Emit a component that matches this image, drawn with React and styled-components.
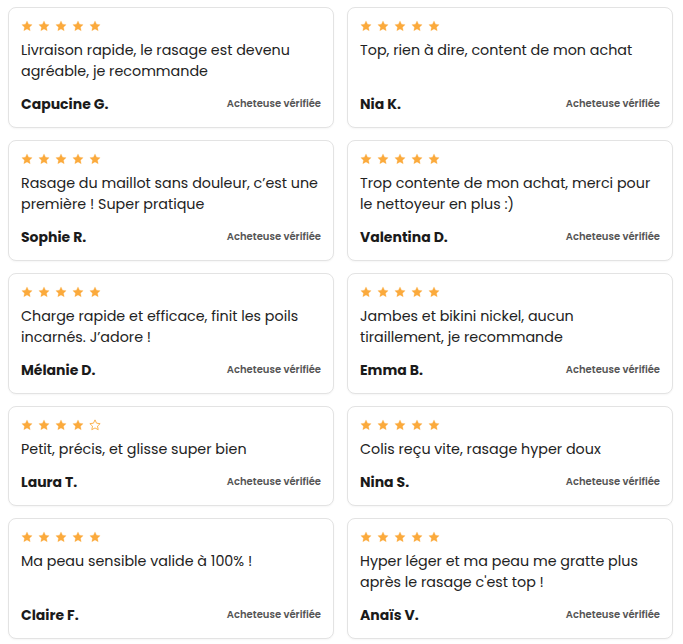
import React from "react";
import styled, { createGlobalStyle } from "styled-components";

const Global = createGlobalStyle`
  html, body { margin: 0; padding: 0; background: #fff; }
  body { font-family: Poppins, "Open Sans", "Liberation Sans", sans-serif; color: #1f1f1f; }
`;

const Page = styled.div`
  padding: 7px 10px 0 8px;
`;

const Grid = styled.div`
  display: grid;
  grid-template-columns: 1fr 1fr;
  column-gap: 13px;
  row-gap: 12px;
`;

const Card = styled.div`
  display: flex;
  flex-direction: column;
  background: #fff;
  border: 1px solid #e3e3e3;
  border-radius: 8px;
  padding: 12px 12px 13px 12px;
  box-shadow: 0 1px 2px rgba(0, 0, 0, 0.04);
`;

const Stars = styled.div`
  display: flex;
  gap: 5px;
  height: 12px;
  align-items: center;
`;

const Text = styled.p`
  margin: 8px 0 0 0;
  font-size: 14.3px;
  line-height: 21px;
  color: #222;
`;

const Footer = styled.div`
  margin-top: auto;
  padding-top: 12px;
  display: flex;
  align-items: center;
  justify-content: space-between;
  height: 20px;
  box-sizing: content-box;
`;

const Name = styled.span`
  font-size: 14px;
  font-weight: 700;
  color: #1a1a1a;
`;

const Badge = styled.span`
  font-size: 10px;
  font-weight: 600;
  color: #555;
`;

const Bottom = styled.div`
  margin-top: 5px;
  border-top: 1px dashed #dcdcdc;
  height: 10px;
`;

const Star = ({ filled }) => (
  <svg width="12" height="12" viewBox="0 0 24 24">
    <path
      d="M12 1.8l3.1 6.6 7.2.9-5.3 5 1.4 7.1L12 17.9l-6.4 3.5 1.4-7.1-5.3-5 7.2-.9z"
      fill={filled ? "#fbaa3c" : "none"}
      stroke="#fbaa3c"
      strokeWidth={filled ? 0.5 : 1.8}
      strokeLinejoin="round"
    />
  </svg>
);

const reviews = [
  { r: 5, t: "Livraison rapide, le rasage est devenu agréable, je recommande", n: "Capucine G." },
  { r: 5, t: "Top, rien à dire, content de mon achat", n: "Nia K." },
  { r: 5, t: "Rasage du maillot sans douleur, c’est une première ! Super pratique", n: "Sophie R." },
  { r: 5, t: "Trop contente de mon achat, merci pour le nettoyeur en plus :)", n: "Valentina D." },
  { r: 5, t: "Charge rapide et efficace, finit les poils incarnés. J’adore !", n: "Mélanie D." },
  { r: 5, t: "Jambes et bikini nickel, aucun tiraillement, je recommande", n: "Emma B." },
  { r: 4, t: "Petit, précis, et glisse super bien", n: "Laura T." },
  { r: 5, t: "Colis reçu vite, rasage hyper doux", n: "Nina S." },
  { r: 5, t: "Ma peau sensible valide à 100% !", n: "Claire F." },
  { r: 5, t: "Hyper léger et ma peau me gratte plus après le rasage c'est top !", n: "Anaïs V." },
];

export default function App() {
  return (
    <>
      <Global />
      <Page>
        <Grid>
          {reviews.map((rv, i) => (
            <Card key={i}>
              <Stars>
                {[0, 1, 2, 3, 4].map((k) => (
                  <Star key={k} filled={k < rv.r} />
                ))}
              </Stars>
              <Text>{rv.t}</Text>
              <Footer>
                <Name>{rv.n}</Name>
                <Badge>Acheteuse vérifiée</Badge>
              </Footer>
            </Card>
          ))}
        </Grid>
        <Bottom />
      </Page>
    </>
  );
}
